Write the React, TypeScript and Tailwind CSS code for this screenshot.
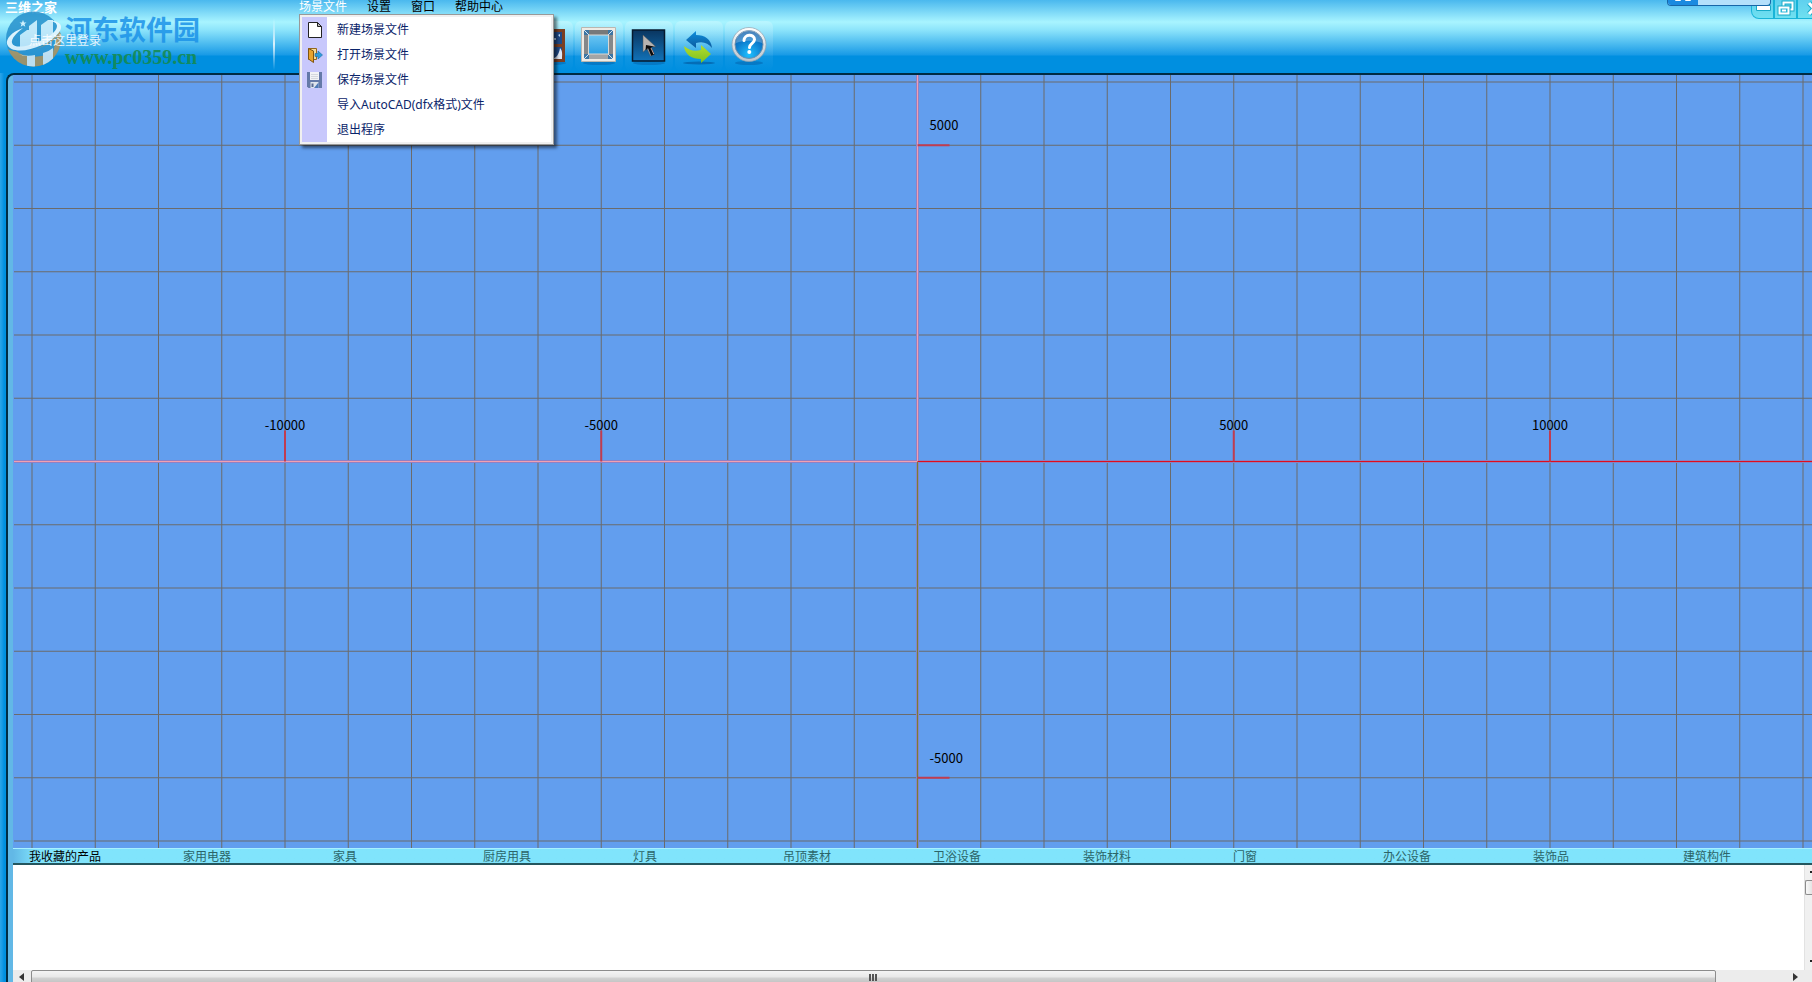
import { ReactNode } from "react";

interface IMenuEntry {
  label: string;
  icon?: ReactNode;
}

const GRID_STEP = 63.25;
const ORIGIN = { x: 904.5, y: 386.5 };

const MENUS = ["场景文件", "设置", "窗口", "帮助中心"];

const CATEGORIES = [
  "我收藏的产品",
  "家用电器",
  "家具",
  "厨房用具",
  "灯具",
  "吊顶素材",
  "卫浴设备",
  "装饰材料",
  "门窗",
  "办公设备",
  "装饰品",
  "建筑构件",
];

const NewFileIcon = () => (
  <svg width="16" height="18" viewBox="0 0 16 18">
    <path d="M1.5 1.5h9l4 4v11h-13z" fill="#fff" stroke="#222" />
    <path d="M10.5 1.5v4h4z" fill="#bbb" stroke="#222" />
  </svg>
);

const OpenFileIcon = () => (
  <svg width="16" height="18" viewBox="0 0 16 18">
    <path d="M1.5 2.5h8v11h-8z" fill="#f6dc9a" stroke="#94681c" />
    <path d="M1.5 2.5l5 2.500v11.500l-5-3.500z" fill="#e8a32c" stroke="#7d5412" />
    <path d="M8 7.500h3V5l4.500 4L11 13v-2.500H8z" fill="#2f9bd8" stroke="#1b6fa8" strokeWidth=".6" />
  </svg>
);

const SaveFileIcon = () => (
  <svg width="17" height="18" viewBox="0 0 17 18">
    <path d="M1 1h15v16H2.500L1 15.500z" fill="#6479a8" />
    <path d="M4 1h9v8H4z" fill="#f2f3f6" />
    <path d="M5 3.500h7M5 5.500h7M5 7.500h7" stroke="#c9ccd4" strokeWidth=".7" />
    <path d="M4.500 11h8v6h-8z" fill="#dfe4ec" />
    <path d="M8 17l4.500-5.500V17z" fill="#4d79b8" />
    <path d="M5.500 12.500h2V16h-2z" fill="#586a92" />
  </svg>
);

const FILE_MENU: IMenuEntry[] = [
  { label: "新建场景文件", icon: <NewFileIcon /> },
  { label: "打开场景文件", icon: <OpenFileIcon /> },
  { label: "保存场景文件", icon: <SaveFileIcon /> },
  { label: "导入AutoCAD(dfx格式)文件" },
  { label: "退出程序" },
];

const WindowIcon = () => (
  <svg width="36" height="40" viewBox="0 0 36 40">
    <ellipse cx="19" cy="37" rx="16" ry="2" fill="#02559a" opacity=".4" />
    <rect x="1" y="3" width="33" height="33" fill="#7a3f22" />
    <path d="M4 6h12v12H4zM19 6h12v12H19zM4 21h12v12H4zM19 21h12v12H19z" fill="#1f4a86" />
    <path d="M20 33c6-1 8-5 9-11 3 3 2 7 2 11z" fill="#dfe8f6" />
    <path d="M27 9l2-1v3zM23 12h2v2h-2z" fill="#bcd6f4" />
  </svg>
);

const FrameIcon = () => (
  <svg width="36" height="40" viewBox="0 0 36 40">
    <defs>
      <linearGradient id="frameGlass" x1="0" y1="0" x2="0" y2="1">
        <stop offset="0" stopColor="#6cc6f2" />
        <stop offset="1" stopColor="#2a9fe4" />
      </linearGradient>
    </defs>
    <ellipse cx="18" cy="37" rx="16" ry="2" fill="#02559a" opacity=".4" />
    <path d="M.5 1.500h34v34H.5z" fill="#eeebe5" stroke="#b9b7b0" />
    <path d="M3 4h29v29H3z" fill="#85888a" />
    <path d="M3 4h29l-5 5H8z" fill="#77797a" />
    <path d="M3 33h29l-5-5H8z" fill="#a3a5a6" />
    <path d="M3 4h5v5H3zM27 4h5v5h-5zM3 28h5v5H3zM27 28h5v5h-5z" fill="#3c76a4" />
    <path d="M3 4l5 5M32 4l-5 5M3 33l5-5M32 33l-5-5" stroke="#d6e4ee" />
    <path d="M7.500 9h20v19h-20z" fill="url(#frameGlass)" stroke="#d9d8d4" />
  </svg>
);

const SelectIcon = () => (
  <svg width="36" height="40" viewBox="0 0 36 40">
    <defs>
      <linearGradient id="selectBg" x1="0" y1="0" x2="0" y2="1">
        <stop offset="0" stopColor="#0a355f" />
        <stop offset="1" stopColor="#1172b8" />
      </linearGradient>
    </defs>
    <ellipse cx="18" cy="37" rx="16" ry="2" fill="#02559a" opacity=".4" />
    <rect x="1.500" y="4" width="32" height="31" fill="url(#selectBg)" stroke="#061a2e" strokeWidth="1.500" />
    <path d="M12 9v17l4-3.500 3.500 7.500 3.500-1.500-3.500-7.500 5-.5z" fill="#b7b3b0" stroke="#555" strokeWidth=".5" />
    <path d="M15 19l8 1.500-3 .8 3.500 7-3.300 1.500-3.200-7.500-2.500 2z" fill="#0a0a0c" />
    <path d="M20 22l2.800 6" stroke="#c9a9a0" />
  </svg>
);

const UndoIcon = () => (
  <svg width="36" height="40" viewBox="0 0 36 40">
    <defs>
      <linearGradient id="undoBlue" x1="0" y1="0" x2="0" y2="1">
        <stop offset="0" stopColor="#0f8fdd" />
        <stop offset="1" stopColor="#0b5a9e" />
      </linearGradient>
      <linearGradient id="undoGreen" x1="0" y1="0" x2="0" y2="1">
        <stop offset="0" stopColor="#b4dd2c" />
        <stop offset="1" stopColor="#7cc022" />
      </linearGradient>
    </defs>
    <ellipse cx="18" cy="37" rx="16" ry="1.500" fill="#02559a" opacity=".6" />
    <path d="M5 14L15 5v4c9 0 15 4 16 13-4-5-9-7-16-5v5z" fill="url(#undoBlue)" />
    <path d="M30 28L20 37v-4C11 33 4 29 3 20c5 4 10 6 17 4v-5z" fill="url(#undoGreen)" />
  </svg>
);

const HelpIcon = () => (
  <svg width="36" height="40" viewBox="0 0 36 40">
    <defs>
      <radialGradient id="helpBg" cx=".5" cy=".85" r=".8">
        <stop offset="0" stopColor="#1fc0ff" />
        <stop offset=".6" stopColor="#0c7fd0" />
        <stop offset="1" stopColor="#0d5ca8" />
      </radialGradient>
      <linearGradient id="helpRim" x1="0" y1="0" x2="0" y2="1">
        <stop offset="0" stopColor="#fff" />
        <stop offset="1" stopColor="#b9c3cc" />
      </linearGradient>
    </defs>
    <ellipse cx="18" cy="37" rx="14" ry="2" fill="#02559a" opacity=".4" />
    <circle cx="18" cy="18.500" r="17" fill="url(#helpRim)" stroke="#8fa0ae" strokeWidth=".7" />
    <circle cx="18" cy="18.500" r="14" fill="url(#helpBg)" stroke="#6d91ae" />
    <path d="M5 17a13 13 0 0 1 26 0c-8-3-18-3-26 0z" fill="#fff" opacity=".25" />
    <path
      d="M13 14.500c0-6.500 10.500-7 10.500-1 0 3.800-5 4-5 8"
      fill="none"
      stroke="#fff"
      strokeWidth="3"
      strokeLinecap="round"
    />
    <circle cx="18.300" cy="26" r="2" fill="#fff" />
  </svg>
);

const TOOLS = [
  { name: "window", icon: <WindowIcon /> },
  { name: "frame", icon: <FrameIcon /> },
  { name: "select", icon: <SelectIcon /> },
  { name: "undo", icon: <UndoIcon /> },
  { name: "help", icon: <HelpIcon /> },
];

const BrandLogo = () => (
  <svg width="58" height="58" viewBox="0 0 58 58">
    <defs>
      <clipPath id="logoClip">
        <circle cx="28.500" cy="29" r="27.500" />
      </clipPath>
    </defs>
    <g clipPath="url(#logoClip)">
      <path d="M0 0h58v58H0z" fill="#2590cc" />
      <path d="M0 38c20 10 42 0 58-20v40H0z" fill="#b3935a" />
      <path d="M9 39c18 4 32-2 43-12l-4 15c-10 6-26 6-34 1z" fill="#2b93cf" />
      <path d="M15 37V25l7-5h2v-4l8-6v26c-6 2-12 2-17 1z" fill="#c9eafa" />
      <path d="M36 35V15l7-5h5v18c-4 4-8 6-12 7z" fill="#c9eafa" />
      <path d="M14 44c5 2 11 2 16 1v13H22V46c-3 0-6-1-8-2zM38 43c4-1 7-3 10-5v20H38z" fill="#dcecf4" />
    </g>
    <path
      d="M18 18C6 22 1 29 2 34c3 9 20 8 35 1 12-6 20-13 19-19-1-4-7-6-14-5 7 0 10 2 10 5 0 5-8 11-17 15-12 6-26 8-28 2-1-4 4-10 11-15z"
      fill="#eef9fe"
    />
    <path d="M18 10l1 2.500h2.500l-2 1.600.8 2.700-2.300-1.600-2.300 1.600.8-2.700-2-1.600H17z" fill="#d8f2fd" />
  </svg>
);

const MinimizeIcon = () => (
  <svg width="22" height="18" viewBox="0 0 22 18">
    <path d="M4.500 5.500h14v5h-14z" fill="#fff" stroke="#18aac8" />
  </svg>
);

const RestoreIcon = () => (
  <svg width="22" height="18" viewBox="0 0 22 18">
    <path d="M8.500 2.500h9v7h-9z" fill="none" stroke="#18aac8" strokeWidth="4" />
    <path d="M8.500 2.500h9v7h-9z" fill="none" stroke="#fff" strokeWidth="2" />
    <path d="M4.500 7.500h9v6h-9z" fill="#18aac8" stroke="#18aac8" strokeWidth="4" />
    <path d="M4.500 7.500h9v6h-9z" fill="#2fb8d8" stroke="#fff" strokeWidth="2" />
    <path d="M7 9.500h4v2H7z" fill="#fff" />
  </svg>
);

const CloseIcon = () => (
  <svg width="22" height="18" viewBox="0 0 22 18">
    <path d="M11 3l10 11M21 3L11 14" stroke="#18aac8" strokeWidth="5" />
    <path d="M11 3l10 11M21 3L11 14" stroke="#fff" strokeWidth="3" />
  </svg>
);

const FileMenu = () => (
  <div className="absolute left-0 top-[14px] z-20 w-[255px] border border-[#999] bg-[#f0f0f0] p-[2px] shadow-[3px_3px_3px_rgba(0,0,0,0.5)]">
    <ul className="bg-white">
      {FILE_MENU.map((entry) => (
        <li key={entry.label}>
          <button className="flex h-[25px] w-full items-center font-['Noto_Sans','Noto_Sans_CJK_SC',sans-serif] text-xs text-[#0a246a]">
            <span className="mr-[10px] flex h-full w-[25px] items-center justify-center bg-[#c8c8fc]">
              {entry.icon}
            </span>
            {entry.label}
          </button>
        </li>
      ))}
    </ul>
  </div>
);

const Header = () => (
  <header className="relative flex h-[73px] shrink-0 bg-[linear-gradient(to_bottom,#4ab8ee_0px,#a8f4ff_22px,#8ce4fb_30px,#189ae6_55px,#008fe0_56px)]">
    <div className="relative w-[273px] shrink-0">
      <h1 className="pl-[5px] text-[13px] leading-[14px] font-bold text-white">
        三维之家
      </h1>
      <div className="absolute left-[5px] top-[10px] flex opacity-85">
        <BrandLogo />
        <div className="pl-[2px]">
          <p className="text-[27px] leading-[38px] font-bold whitespace-nowrap text-[#1c93e8]">
            河东软件园
          </p>
          <p className="font-['Liberation_Serif',serif] text-[20px] leading-[18px] font-bold text-[#168a4a]">
            www.pc0359.cn
          </p>
        </div>
      </div>
      <button className="absolute left-[29px] top-[34px] text-xs leading-3 text-white/85">
        点击这里登录
      </button>
    </div>
    <div className="mt-[18px] h-[52px] w-[2px] bg-linear-to-b from-white/0 via-white/80 to-white/0" />
    <div className="relative ml-6 flex-1">
      <nav className="flex gap-5 text-xs leading-[11px]">
        {MENUS.map((menu, index) => (
          <button key={menu} className={index === 0 ? "text-white" : "text-black"}>
            {menu}
          </button>
        ))}
      </nav>
      <FileMenu />
      <div className="mt-[10px] flex gap-[2px] pl-[226px]">
        {TOOLS.map((tool) => (
          <button
            key={tool.name}
            aria-label={tool.name}
            className="flex h-[50px] w-12 items-center justify-center rounded-md bg-linear-to-b from-white/20 to-white/0"
          >
            {tool.icon}
          </button>
        ))}
      </div>
    </div>
    <div className="flex w-[61px] shrink-0 items-start overflow-hidden">
      {[
        { name: "minimize", icon: <MinimizeIcon /> },
        { name: "restore", icon: <RestoreIcon /> },
        { name: "close", icon: <CloseIcon /> },
      ].map((control) => (
        <button
          key={control.name}
          aria-label={control.name}
          className="h-[19px] w-[23px] shrink-0 overflow-hidden border border-t-0 border-[#18b4d8] bg-linear-to-b from-[#5fd0ee] to-[#6fe0f0] first:rounded-bl-lg"
        >
          {control.icon}
        </button>
      ))}
    </div>
    {/* Docked helper bar, mostly above the window */}
    <div className="absolute top-0 right-[41px] flex h-[6px] w-[104px] overflow-hidden rounded-b-sm border border-t-0 border-[#1766a8] bg-[#b4e0fb]">
      <div className="flex w-[30px] justify-center gap-[4px] bg-[#1a8ae0]">
        <span className="h-px w-[6px] rounded-b-sm bg-white" />
        <span className="h-px w-[6px] rounded-b-sm bg-white" />
      </div>
    </div>
  </header>
);

const PlanCanvas = () => {
  const columns = Array.from({ length: 60 }, (_, i) => ORIGIN.x + (i - 14) * GRID_STEP);
  const rows = Array.from({ length: 40 }, (_, i) => ORIGIN.y + (i - 6) * GRID_STEP);
  const { x, y } = ORIGIN;

  return (
    <div className="relative min-h-0 flex-1 bg-[#629eee]">
      <svg className="absolute inset-0 h-full w-full">
        <g stroke="#6b6b6b">
          {columns.map((cx) => (
            <line key={cx} x1={cx} x2={cx} y1="0" y2="100%" />
          ))}
          {rows.map((cy) => (
            <line key={cy} x1="1" x2="100%" y1={cy} y2={cy} />
          ))}
        </g>

        {/* Axes */}
        <g stroke="#9080c4" strokeWidth="3">
          <line x1="1" x2={x} y1={y} y2={y} />
          <line x1={x} x2={x} y1="0" y2={y} />
        </g>
        <g stroke="#8484c4" strokeWidth="3">
          <line x1={x} x2="100%" y1={y} y2={y} />
          <line x1={x} x2={x} y1={y} y2="100%" />
        </g>
        <line x1={x} x2={x} y1={y} y2="100%" stroke="#7c7c30" />
        <line x1="1" x2={x} y1={y} y2={y} stroke="#f2a0b0" />
        <line x1={x} x2={x} y1="0" y2={y} stroke="#f2a0b0" />
        <line x1={x} x2="100%" y1={y} y2={y} stroke="#e00c1c" />

        {/* Ticks */}
        <g stroke="#c03c50" strokeWidth="2">
          {[-10, -5, 5, 10].map((n) => (
            <line
              key={n}
              x1={x + n * GRID_STEP}
              x2={x + n * GRID_STEP}
              y1={y - 31}
              y2={y}
            />
          ))}
          {[-5, 5].map((n) => (
            <line key={n} x1={x} x2={x + 32} y1={y + n * GRID_STEP} y2={y + n * GRID_STEP} />
          ))}
        </g>
        <g fontSize="13" fill="#000">
          {[-10, -5, 5, 10].map((n) => (
            <text key={n} x={x + n * GRID_STEP} y={y - 32} textAnchor="middle">
              {n * 1000}
            </text>
          ))}
          {[-5, 5].map((n) => (
            <text key={n} x={x + 12} y={y - n * GRID_STEP - 15}>
              {n * 1000}
            </text>
          ))}
        </g>
      </svg>
    </div>
  );
};

const CategoryTabs = () => (
  <div className="flex h-[17px] shrink-0 overflow-hidden border-t border-b-2 border-t-[#a8f0ff] border-b-[#24565e] bg-linear-to-r from-[#62b8e6] to-[#80e4fc] to-[24px] pl-4">
    {CATEGORIES.map((category, index) => (
      <button
        key={category}
        className={
          index === 0
            ? "w-[154px] shrink-0 text-left text-xs leading-[14px] text-black"
            : "w-[150px] shrink-0 text-left text-xs leading-[14px] text-[#2c6468]"
        }
      >
        {category}
      </button>
    ))}
  </div>
);

const ProductPanel = () => (
  <div className="flex h-[117px] shrink-0 flex-col overflow-hidden bg-white">
    <div className="flex h-[105px] shrink-0 justify-end">
      <div className="flex w-2 flex-col items-end justify-between overflow-hidden border-l border-[#e2e2e2] bg-[#f0f0f0] pt-[6px] pb-[8px]">
        <span className="h-[2px] w-[2px] bg-[#222]" />
        <div className="mb-auto mt-[7px] h-[15px] w-[7px] rounded-l-xs border border-r-0 border-[#8c8c8c] bg-linear-to-r from-[#f8f8f8] to-[#e4e4e4]" />
        <span className="h-[2px] w-[2px] bg-[#222]" />
      </div>
    </div>
    <div className="flex h-[17px] shrink-0 items-stretch bg-[#ececec]">
      <button aria-label="scroll left" className="flex w-[18px] justify-center pt-[3px] pr-[2px]">
        <svg width="5" height="8" viewBox="0 0 5 8">
          <path d="M5 0v8L0 4z" fill="#333" />
        </svg>
      </button>
      <div className="flex-1">
        <div className="flex h-full w-[96%] items-start justify-center gap-px rounded-t-xs border border-[#8c8c8c] bg-[linear-gradient(to_bottom,#f4f4f4_0px,#e8e8e8_6px,#d2d2d2_7px,#c2c2c2_12px)] pt-[3px]">
          <span className="h-[7px] w-[2px] bg-[#555]" />
          <span className="h-[7px] w-[2px] bg-[#555]" />
          <span className="h-[7px] w-[2px] bg-[#555]" />
        </div>
      </div>
      <button aria-label="scroll right" className="mr-2 flex w-[18px] justify-center pt-[3px]">
        <svg width="5" height="8" viewBox="0 0 5 8">
          <path d="M0 0v8l5-4z" fill="#333" />
        </svg>
      </button>
    </div>
  </div>
);

export default function App() {
  return (
    <div className="flex h-screen flex-col overflow-hidden bg-linear-to-r from-[#2aa6ea] to-[#0090e0] to-[4px] font-['Noto_Sans_CJK_SC',sans-serif]">
      <Header />
      <main className="ml-[6px] flex min-h-0 flex-1 flex-col rounded-tl-lg border-t-2 border-l-2 border-[#002c44] bg-[#62b8e6] pl-[5px]">
        <PlanCanvas />
        <CategoryTabs />
        <ProductPanel />
      </main>
    </div>
  );
}
